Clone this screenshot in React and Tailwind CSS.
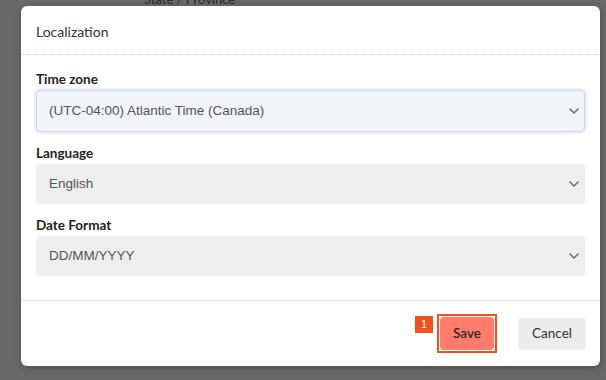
import React from 'react';

function Chevron() {
  return (
    <svg width="10" height="6" viewBox="0 0 10 6" fill="none" className="shrink-0">
      <path d="M1 1l4 4 4-4" stroke="#6b6b6b" strokeWidth="1.5" strokeLinecap="round" strokeLinejoin="round" />
    </svg>
  );
}

function Field({ label, value, focused }) {
  return (
    <div className="flex flex-col">
      <label className="text-[13.5px] font-bold text-[#222] leading-[16px] mb-[3px] font-['Lato',sans-serif]">{label}</label>
      <div
        className={
          focused
            ? 'h-[42px] flex items-center justify-between pl-[12px] pr-[5px] rounded-[4px] bg-[#f3f4f8] border border-[#c9d6f5] shadow-[0_0_0_2px_#e8f0ff]'
            : 'h-[40px] flex items-center justify-between pl-[13px] pr-[6px] rounded-[4px] bg-[#eeeeee]'
        }
      >
        <span className="text-[13.5px] text-[#555] font-['Liberation_Sans',Arial,sans-serif]">{value}</span>
        <Chevron />
      </div>
    </div>
  );
}

export default function App() {
  return (
    <div className="w-[606px] h-[380px] bg-[#686868] overflow-hidden font-['Lato',sans-serif]">
      <div className="h-[6px] overflow-hidden pl-[144px]">
        <div className="mt-[-9px] text-[13px] text-[#2a2a2a] leading-[16px]">State / Province</div>
      </div>
      <div className="ml-[21px] w-[579px] h-[360px] bg-white rounded-[6px] flex flex-col shadow-[0_2px_6px_rgba(0,0,0,0.25)]">
        <div className="h-[49px] shrink-0 flex items-center px-[15px] border-b border-dotted border-[#cfcfcf]">
          <span className="text-[14px] text-[#333] mt-[2px]">Localization</span>
        </div>
        <div className="flex flex-col gap-[13px] px-[15px] pt-[16px] pb-[24px] border-b border-dotted border-[#cfcfcf]">
          <Field label="Time zone" value="(UTC-04:00) Atlantic Time (Canada)" focused />
          <Field label="Language" value="English" />
          <Field label="Date Format" value="DD/MM/YYYY" />
        </div>
        <div className="flex-1 flex items-center justify-end gap-[21px] pr-[14px]">
          <div className="flex items-start gap-[4px]">
            <div className="w-[18px] h-[17px] bg-[#f0521c] text-white text-[11px] flex items-center justify-center mt-[2px] font-['Liberation_Sans',Arial,sans-serif]">1</div>
            <div className="p-[1px] border-2 border-[#f0521c]">
              <button className="w-[54px] h-[33px] rounded-[4px] bg-[#ff7b6b] text-[13.5px] text-[#222] font-medium">Save</button>
            </div>
          </div>
          <button className="w-[68px] h-[32px] rounded-[4px] bg-[#ececec] text-[13.5px] text-[#333]">Cancel</button>
        </div>
      </div>
    </div>
  );
}
